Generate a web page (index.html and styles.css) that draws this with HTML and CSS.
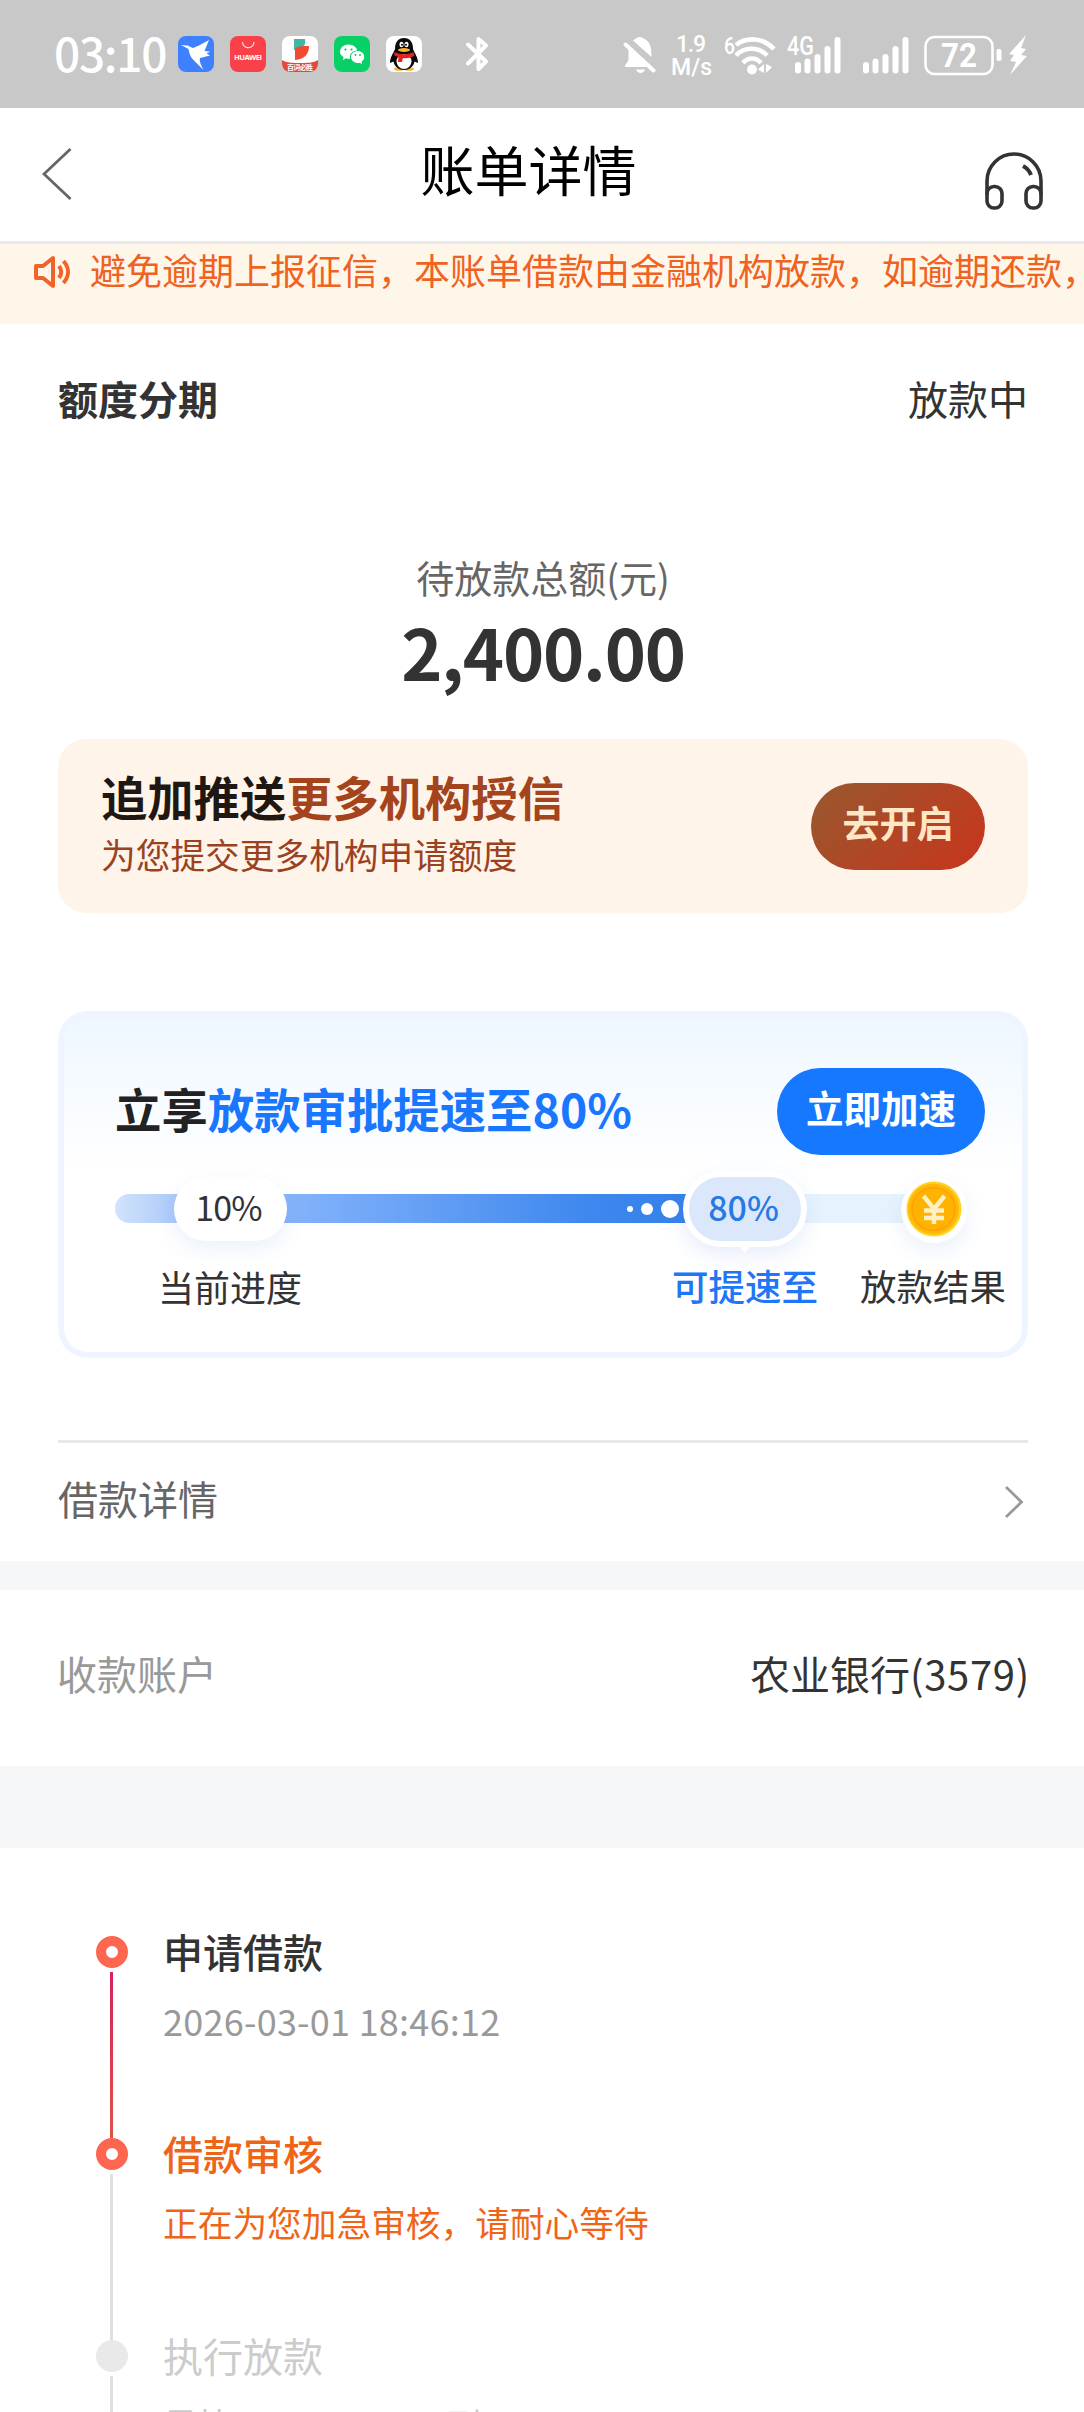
FILE: index.html
```html
<!DOCTYPE html>
<html lang="zh-CN">
<head>
<meta charset="utf-8">
<title>账单详情</title>
<link rel="stylesheet" href="styles.css">
</head>
<body>
<div class="status">
  <span class="clock">03:10</span>
  <div class="apps">
    <svg class="app" viewBox="0 0 36 36"><rect width="36" height="36" rx="8" fill="#3f80ff"/><path d="M3 9l6 .6c2 .2 3 1.800 6 2.400l6-2.500 10-5.500-4.500 11 6 .8-4 1.400 3.500 2.300-10 2.500c-1 3 1 7 3.500 12l-10-10c-3-3.200-4-6-5-11z" fill="#fff"/></svg>
    <svg class="app" viewBox="0 0 36 36"><rect width="36" height="36" rx="8" fill="#fa4149"/><path d="M12.500 6c.5 7.500 11 7.500 11.500 0" fill="none" stroke="#ffd9d9" stroke-width="1.200"/><text class="brand" x="4" y="24" textLength="28">HUAWEI</text></svg>
    <svg class="app" viewBox="0 0 36 36"><rect width="36" height="36" rx="8" fill="#fff"/><path d="M12 3h11c1 8-3 11-11 11z" fill="#45b5a3"/><path d="M27 10c0 9-5 13-14 14V13c2-3 8-3 14-3z" fill="#f04a33"/><path d="M0 24c4 3 12 3 18 3s14 0 18-3v4a8 8 0 0 1-8 8H8a8 8 0 0 1-8-8z" fill="#e2483b"/><text class="ribbon" x="5" y="33.500" textLength="26">百词必胜</text></svg>
    <svg class="app" viewBox="0 0 36 36"><rect width="36" height="36" rx="8" fill="#07d166"/><path d="M6 16c0-4.500 4-7.500 8.500-7.500S23 11.500 23 14.500c-4 0-7 3-7 6 0 1 0 1.500.4 2.300-1.600.2-3-.1-4.400-.5L9 24l.6-3C7.300 19.700 6 18 6 16z" fill="#fff"/><path d="M17 21c0-3.500 3-6 6.700-6s6.500 2.500 6.500 6c0 2-1 3.500-2.600 4.600l.4 2.400-2.500-1.300C21 28 17 24.500 17 21z" fill="#fff"/><g fill="#07c160"><circle cx="11.500" cy="13.500" r="1.100"/><circle cx="17.500" cy="13.500" r="1.100"/><circle cx="21.500" cy="19" r=".9"/><circle cx="26" cy="19" r=".9"/></g></svg>
    <svg class="app" viewBox="0 0 36 36"><rect width="36" height="36" rx="8" fill="#fff"/><ellipse cx="13" cy="33" rx="5" ry="1.800" fill="#f5b52c"/><ellipse cx="23" cy="33" rx="5" ry="1.800" fill="#f5b52c"/><path d="M9 13C9 6 12 2 18 2s9 4 9 11c2 5 5 8 5 14l-3.500-1.500C27.500 31 23 34 18 34s-9.500-3-10.500-8.500L4 27c0-6 3-9 5-14z" fill="#0a0a0a"/><ellipse cx="18" cy="25.500" rx="7.500" ry="7.500" fill="#fff"/><path d="M8.500 16c6 3 13 3 19 0l.8 4c-4.500 2-8 2.300-11.500 2.300L16 26h-4l.5-5-4.300-1.500z" fill="#e2231f"/><ellipse cx="15.500" cy="8.500" rx="2" ry="2.800" fill="#fff"/><ellipse cx="20.500" cy="8.500" rx="2" ry="2.800" fill="#fff"/><circle cx="16" cy="8.800" r="1"/><circle cx="20" cy="8.800" r="1"/><ellipse cx="18" cy="14" rx="6" ry="1.900" fill="#f8b62a"/></svg>
  </div>
  <svg class="bt" viewBox="0 0 24 36"><path d="M2 8.500L20 25.500 12.500 33V3L20 9.500 2 27.500" fill="none" stroke="#fff" stroke-width="4" stroke-linejoin="round" stroke-linecap="round"/></svg>
  <svg class="right" viewBox="0 0 412 44">
    <g fill="#fff">
      <path d="M10 7.500c3-1.600 4-3.500 6.500-3.500 3 0 4 1.500 6 2.500 4.500 3 6 7 6 17.500z"/>
      <path d="M13 36.500h9c-1.500 4.500-7.500 4.500-9 0z"/>
    </g>
    <path d="M3 10.500L31 37" stroke="#c8c8c8" stroke-width="8"/>
    <path d="M2.500 11.500L30.500 37.500" stroke="#fff" stroke-width="4" stroke-linecap="round"/>
    <path d="M5.500 16L24 34H2c0-4 3.500-4 3.500-9z" fill="#fff"/>
    <g class="signal-text">
      <text x="53" y="19" font-size="23" textLength="30">1.9</text>
      <text x="48" y="42" font-size="24" textLength="41" lengthAdjust="spacingAndGlyphs">M/s</text>
      <text x="101" y="20.500" font-size="23" textLength="11" lengthAdjust="spacingAndGlyphs">6</text>
      <text x="164" y="22" font-size="25" textLength="27" lengthAdjust="spacingAndGlyphs">4G</text>
    </g>
    <g fill="none" stroke="#fff" stroke-width="4.600">
      <path d="M113 12c10-8 27-8 38 4"/>
      <path d="M113 22.500c8-9 23-9 31 0"/>
      <path d="M120 30c5-6 13-6 18 0"/>
    </g>
    <circle cx="129" cy="36.500" r="5" fill="#fff"/>
    <path d="M141 31v9l-6-3.500zM143 31v9l6-6z" fill="#fff"/>
    <g stroke="#fff" stroke-width="6" stroke-linecap="round">
      <path d="M175 32v5.500M184.500 28.500v9M194.500 24v13.500M204.500 16v21.500M214.500 7v30.500"/>
      <path d="M243 32v5.500M252.500 28.500v9M262.500 24v13.500M272.500 16v21.500M282.500 7v30.500"/>
    </g>
    <rect x="302.500" y="4" width="67" height="37" rx="9" fill="none" stroke="#fff" stroke-width="2.600"/>
    <rect x="373.500" y="16" width="5" height="12" rx="2" fill="#fff"/>
    <text class="battery" x="318" y="34" textLength="36" lengthAdjust="spacingAndGlyphs">72</text>
    <path d="M403 2l-17 19 5 1-4 6 6 1-6 13 17-19-6-1 5-6-5-1z" fill="#fff"/>
  </svg>
</div>

<header class="header">
  <svg class="back" viewBox="0 0 30 52"><path d="M28.500 1L2 26l26.500 25" fill="none" stroke="#666" stroke-width="2.800"/></svg>
  <h1 class="title">账单详情</h1>
  <svg class="service" viewBox="0 0 58 58"><g fill="none" stroke="#333" stroke-width="3.600"><path d="M2 43V29a27 27 0 0 1 54 0v14"/><rect x="2" y="34.500" width="15" height="21.500" rx="7"/><rect x="41" y="34.500" width="15" height="21.500" rx="7"/><path d="M38 14c4 2 6.500 5 8 9" stroke-width="4"/></g></svg>
</header>

<div class="notice">
  <svg class="horn" viewBox="0 0 37 34"><g fill="none" stroke="#f0642a" stroke-width="4" stroke-linejoin="round"><path d="M2 11h7l10-8v28l-10-8H2z"/><path d="M25 11c3 4 3 8 0 12M29.500 6c6 7 6 15 0 22"/></g></svg>
  <span>避免逾期上报征信，本账单借款由金融机构放款，如逾期还款，</span>
</div>

<main class="summary">
  <div class="state"><b>额度分期</b><span>放款中</span></div>
  <div class="amount-label">待放款总额(元)</div>
  <div class="amount">2,400.00</div>

  <section class="promo">
    <div class="promo-text">
      <h2>追加推送<em>更多机构授信</em></h2>
      <p>为您提交更多机构申请额度</p>
    </div>
    <button class="open">去开启</button>
  </section>

  <section class="boost">
    <div class="boost-head">
      <h2>立享<em>放款审批提速至80%</em></h2>
      <button class="speed">立即加速</button>
    </div>
    <div class="track">
      <div class="fill"><i class="d1"></i><i class="d2"></i><i class="d3"></i></div>
      <span class="pill now">10%</span>
      <span class="pill goal">80%</span>
      <svg class="coin" viewBox="0 0 66 66"><circle cx="33" cy="33" r="33" fill="#fff"/><circle cx="33" cy="32" r="27.500" fill="#ffd51f"/><circle cx="32.500" cy="32" r="25.500" fill="#ffb70c"/><circle cx="32.500" cy="32" r="21.500" fill="#ffb300" stroke="#ffa000" stroke-width="1.500"/><path d="M22.500 19L33 32l10.500-13M33 31v16M23 33.500h20M23 41h20" fill="none" stroke="#fff0c4" stroke-width="4.400"/></svg>
    </div>
    <div class="labels"><span>当前进度</span><b>可提速至</b><span>放款结果</span></div>
  </section>

  <div class="detail">
    <span>借款详情</span>
    <svg class="more" viewBox="0 0 20 34"><path d="M2 2l15.500 15L2 32" fill="none" stroke="#999" stroke-width="2.800"/></svg>
  </div>
</main>

<div class="account"><span class="muted">收款账户</span><span>农业银行<span class="digits">(3579)</span></span></div>

<ol class="timeline">
  <li class="step done">
    <div class="rail"><i class="dot"></i><i class="line"></i></div>
    <div class="info"><h3>申请借款</h3><p class="date">2026-03-01 18:46:12</p></div>
  </li>
  <li class="step active">
    <div class="rail"><i class="dot"></i><i class="line"></i></div>
    <div class="info"><h3>借款审核</h3><p>正在为您加急审核，请耐心等待</p></div>
  </li>
  <li class="step pending">
    <div class="rail"><i class="dot"></i><i class="line"></i></div>
    <div class="info"><h3>执行放款</h3><p>最快<span class="due">2026-03-01</span>到</p></div>
  </li>
</ol>
</body>
</html>
```
FILE: styles.css
```css
* { box-sizing: border-box; margin: 0; padding: 0; }
body {
  height: 2412px;
  overflow: hidden;
  display: flex;
  flex-direction: column;
  background: #f6f7f9;
  color: #333;
  font-family: "Noto Sans CJK SC", sans-serif;
  font-size: 40px;
}
svg { display: block; flex: none; }
em, i { font-style: normal; }
button { border: 0; font-family: inherit; font-weight: 700; flex: none; }
ol { list-style: none; }

.status {
  height: 108px;
  flex: none;
  display: flex;
  align-items: flex-start;
  background: #c8c8c8;
  padding: 36px 0 0 54px;
}
.clock { width: 124px; color: #fff; font-size: 46px; line-height: 32px; font-weight: 500; white-space: nowrap; letter-spacing: -1.300px; }
.apps { display: flex; gap: 16px; }
.app { width: 36px; height: 36px; }
.brand { font: 700 7.500px "Open Sans", sans-serif; fill: #fff; }
.ribbon { font: 700 7px "Noto Sans CJK SC", sans-serif; fill: #fff; }
.bt { width: 24px; height: 36px; margin-left: 44px; }
.right { width: 412px; height: 44px; margin: -3px 0 0 133px; }
.signal-text { font-family: Roboto, sans-serif; font-weight: 500; fill: #fff; }
.battery { font: 700 34px Roboto, sans-serif; fill: #fff; }

.header {
  height: 136px;
  flex: none;
  display: flex;
  justify-content: space-between;
  background: #fff;
  border-bottom: 3px solid #e9e9e9;
  padding: 0 41px 0 42px;
}
.back { width: 30px; height: 52px; margin-top: 40px; }
.title { color: #000; font-size: 54px; font-weight: 400; line-height: 80px; margin-top: 21px; }
.service { width: 58px; height: 58px; margin-top: 44px; }

.notice {
  height: 80px;
  flex: none;
  display: flex;
  gap: 19px;
  overflow: hidden;
  white-space: nowrap;
  background: #fff6ea;
  color: #f0621f;
  font-size: 36px;
  line-height: 40px;
  padding: 5px 0 0 34px;
}
.horn { width: 37px; height: 34px; margin-top: 6px; }

.summary { height: 1237px; flex: none; background: #fff; padding: 44px 56px 0 58px; }
.state { display: flex; justify-content: space-between; line-height: 60px; }
.amount-label { margin-top: 124px; text-align: center; font-size: 38px; line-height: 50px; color: #666; }
.amount { padding-top: 1px; text-align: center; font-size: 70px; line-height: 96px; font-weight: 700; letter-spacing: -1.200px; }

.promo {
  height: 174px;
  margin-top: 40px;
  display: flex;
  justify-content: space-between;
  border-radius: 28px;
  background: #fff4e9;
  padding: 29px 43px 0 43px;
}
.promo h2 { font-size: 46.300px; line-height: 56px; color: #1f1712; }
.promo em { color: #a3441c; }
.promo p { margin-top: 6px; font-size: 34.700px; line-height: 48px; color: #9a421f; }
.open {
  width: 174px;
  height: 87px;
  margin-top: 15px;
  border-radius: 44px;
  background: linear-gradient(135deg, #9c552d 10%, #c13a1f 85%);
  color: #ffe6c4;
  font-size: 37px;
  padding-bottom: 9px;
}

.boost {
  height: 347px;
  margin-top: 98px;
  border: 6px solid #eef5fe;
  border-radius: 30px;
  background: linear-gradient(#eef7ff, #fff 155px);
  padding: 51px 37px 0 51px;
}
.boost-head { display: flex; justify-content: space-between; }
.boost h2 { margin-top: 6px; font-size: 46.400px; line-height: 67px; color: #222; white-space: nowrap; }
.boost em { color: #1876ff; }
.speed { width: 208px; height: 87px; border-radius: 44px; background: #1677ff; color: #fff; font-size: 37.500px; padding-bottom: 10px; }
.track { position: relative; width: 820px; height: 29px; margin-top: 39px; border-radius: 15px; background: #e6f3fe; }
.fill {
  width: 600px;
  height: 29px;
  display: flex;
  align-items: center;
  border-radius: 15px 0 0 15px;
  background: linear-gradient(90deg, #d2e3fc, #a5c6f8 70px, #7eaffa 200px, #3d87ee 480px, #3380e8);
}
.fill i { border-radius: 50%; background: #fff; }
.d1 { width: 6px; height: 6px; margin-left: 512px; }
.d2 { width: 12px; height: 12px; margin-left: 8px; }
.d3 { width: 18px; height: 18px; margin-left: 8px; }
.pill { position: absolute; text-align: center; font-size: 34px; border-radius: 32px; }
.now { left: 59px; top: -17px; width: 113px; height: 64px; padding-right: 4px; line-height: 59px; letter-spacing: -.8px; background: #fff; box-shadow: 0 8px 20px rgba(60, 110, 220, .1); }
.goal {
  left: 568px;
  top: -23px;
  width: 124px;
  height: 76px;
  padding-right: 3px;
  line-height: 60px;
  border: 6px solid #fff;
  border-radius: 38px;
  background: #dbe8fc;
  color: #2979e3;
  font-weight: 500;
  box-shadow: 0 8px 20px rgba(60, 110, 220, .12);
}
.goal::after {
  content: "";
  position: absolute;
  left: 46px;
  top: 64px;
  border: 10px solid transparent;
  border-top: 12px solid #fff;
  border-bottom: 0;
}
.coin { position: absolute; left: 786px; top: -17px; width: 66px; height: 66px; border-radius: 50%; box-shadow: 0 8px 20px rgba(60, 110, 220, .1); }
.labels { width: 900px; display: flex; margin-top: 38px; margin-left: 43px; font-size: 36px; line-height: 50px; white-space: nowrap; }
.labels b { margin: 0 42px 0 370px; color: #2176f5; font-weight: 500; font-size: 36.500px; }
.labels span:last-child { font-size: 36.500px; }

.detail {
  height: 121px;
  margin-top: 82px;
  display: flex;
  justify-content: space-between;
  align-items: center;
  border-top: 3px solid #e8e8e8;
  color: #666;
}
.detail span { padding-bottom: 8px; }
.more { width: 20px; height: 34px; margin-right: 4px; }

.account {
  height: 176px;
  flex: none;
  margin-top: 29px;
  display: flex;
  justify-content: space-between;
  align-items: center;
  background: #fff;
  padding: 0 54px 10px 57px;
}
.muted { color: #999; }
.digits { letter-spacing: .7px; }

.timeline { flex: 1; min-height: 0; margin-top: 82px; overflow: hidden; background: #fff; padding: 88px 57px 0 96px; }
.step { display: flex; gap: 35px; height: 202px; }
.rail { width: 32px; display: flex; flex-direction: column; align-items: center; gap: 4px; }
.dot { width: 32px; height: 32px; border: 10px solid #ff6650; border-radius: 50%; flex: none; }
.line { width: 3px; flex: 1; margin-right: 1px; background: #e0e0e0; }
.done .line { background: linear-gradient(#d5225c, #e0524a); }
.pending .dot { background: #e9e9e9; border-color: #e9e9e9; }
.info { margin-top: -15px; white-space: nowrap; }
.info h3 { font-size: 40px; line-height: 60px; font-weight: 500; }
.info p { margin-top: 14px; font-size: 34.700px; line-height: 50px; }
.info .date { font-size: 36px; letter-spacing: .25px; color: #999; }
.active { color: #ef6518; }
.pending { color: #ccc; }
.pending h3 { font-weight: 400; }
.due { margin: 0 22px 0 14px; }
```
